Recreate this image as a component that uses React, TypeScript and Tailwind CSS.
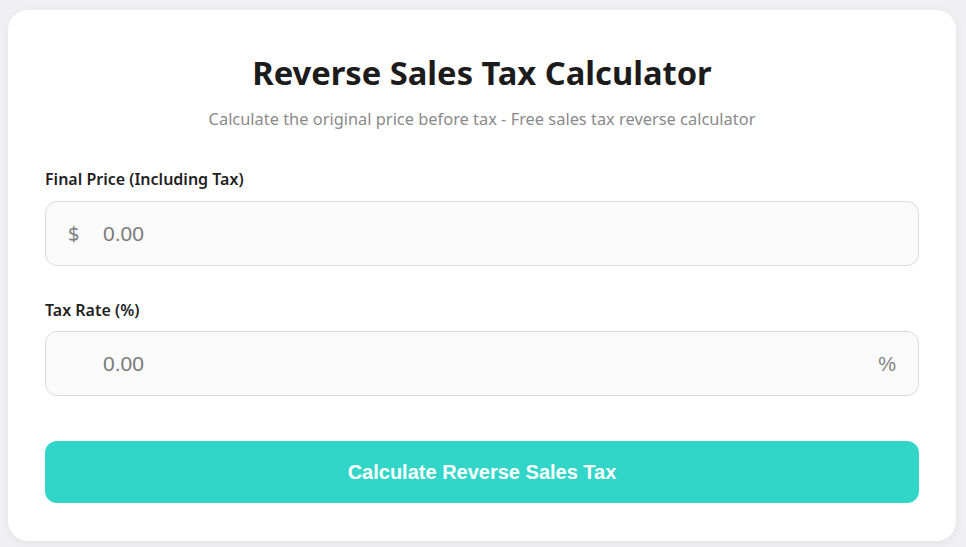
export default function App() {
  return (
    <div className="min-h-[547px] bg-[#f0f0f3] px-[8px] pt-[10px] pb-[7px] font-['Noto_Sans',sans-serif]">
      <div className="w-[948px] rounded-[20px] bg-white px-[37px] pt-[39px] pb-[38px] shadow-[0_2px_10px_rgba(0,0,0,0.06)]">
        {/* Header */}
        <div className="text-center">
          <h1 className="text-[32.7px] font-bold leading-[48px] text-[#1c1c1c]">
            Reverse Sales Tax Calculator
          </h1>
          <p className="mt-[10px] text-[16.4px] leading-[24px] text-[#8a8a8a]">
            Calculate the original price before tax - Free sales tax reverse calculator
          </p>
        </div>

        {/* Final price */}
        <div className="mt-[37px]">
          <label className="block text-[16px] font-semibold leading-[22px] text-[#1f1f1f]">
            Final Price (Including Tax)
          </label>
          <div className="mt-[11px] flex h-[65px] items-center rounded-[12px] border border-[#dcdcdc] bg-[#fafafa] px-[22px]">
            <span className="w-[35px] text-[20px] text-[#808080]">$</span>
            <span className="font-['Liberation_Sans',sans-serif] text-[21px] text-[#7a7a7a]">0.00</span>
          </div>
        </div>

        {/* Tax rate */}
        <div className="mt-[33px]">
          <label className="block text-[16px] font-semibold leading-[22px] text-[#1f1f1f]">
            Tax Rate (%)
          </label>
          <div className="mt-[10px] flex h-[65px] items-center rounded-[12px] border border-[#dcdcdc] bg-[#fafafa] pl-[57px] pr-[22px]">
            <span className="flex-1 font-['Liberation_Sans',sans-serif] text-[21px] text-[#7a7a7a]">0.00</span>
            <span className="font-['Liberation_Sans',sans-serif] text-[20px] text-[#808080]">%</span>
          </div>
        </div>

        <button className="mt-[45px] flex h-[62px] w-full items-center justify-center rounded-[12px] bg-[#32d6c8] font-['Liberation_Sans',sans-serif] text-[20px] font-bold text-white">
          Calculate Reverse Sales Tax
        </button>
      </div>
    </div>
  );
}
